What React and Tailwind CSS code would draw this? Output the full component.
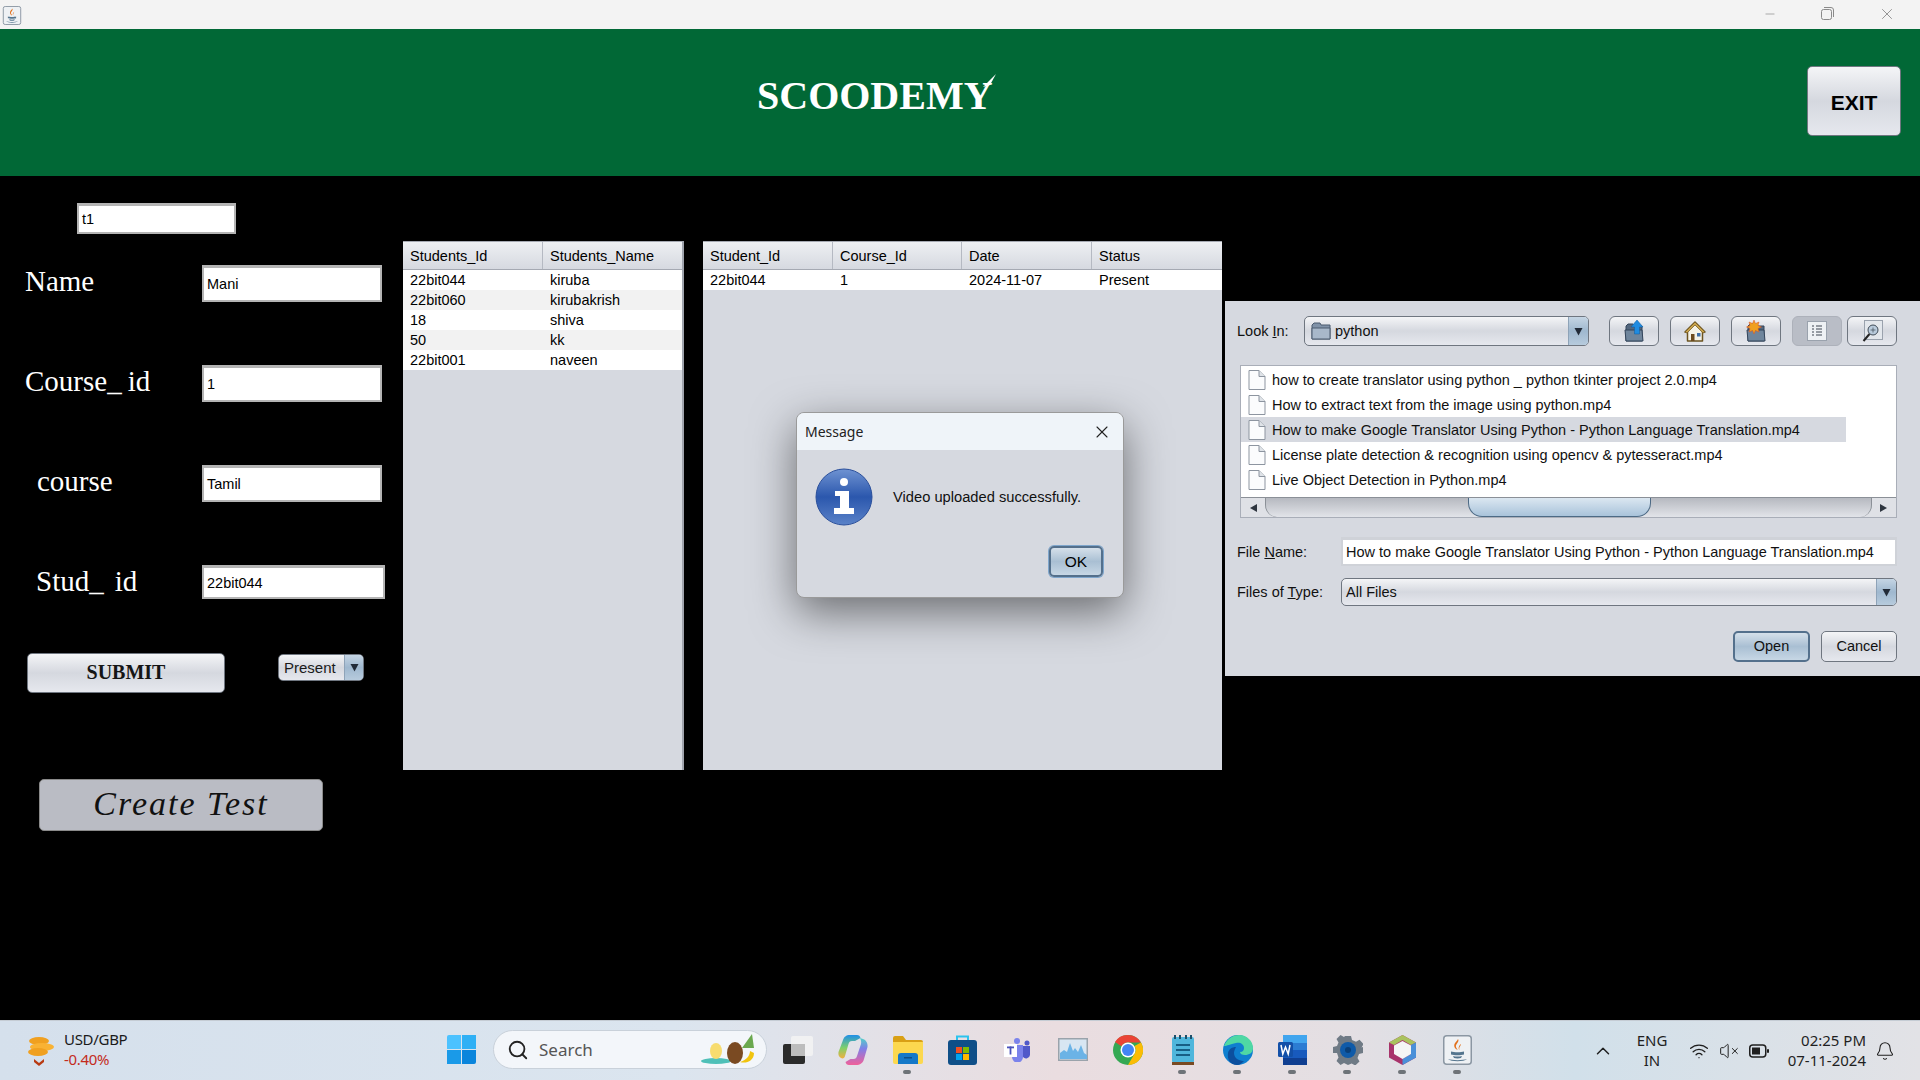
import React from 'react'
import { ChevronUp, Search, Bell, X, Minus, VolumeX, Wifi } from 'lucide-react'

const sans = "font-['Liberation_Sans',Arial,sans-serif]"
const serif = "font-['Liberation_Serif','Times_New_Roman',serif]"
const ui = "font-['Noto_Sans','Open_Sans',sans-serif]"

const btn = 'bg-gradient-to-b from-[#f4f5f7] via-[#d5d8df] to-[#e6e8ee] border border-[#6f7680] rounded-[5px]'
const focusBtn = 'bg-gradient-to-b from-[#d5e0ea] via-[#a9bfd3] to-[#c7d7e5] border-2 border-[#54708c] rounded-[5px]'

const students = [
  ['22bit044', 'kiruba'],
  ['22bit060', 'kirubakrish'],
  ['18', 'shiva'],
  ['50', 'kk'],
  ['22bit001', 'naveen'],
]

const files = [
  'how to create translator using python _ python tkinter project 2.0.mp4',
  'How to extract text from the image using python.mp4',
  'How to make Google Translator Using Python - Python Language Translation.mp4',
  'License plate detection & recognition using opencv & pytesseract.mp4',
  'Live Object Detection in Python.mp4',
]

function Field({ value, className = 'w-[180px] h-[37px]' }) {
  return (
    <div className={`${className} bg-white border-2 border-t-[3px] border-[#b4b4b4] flex items-center pl-[3px] pt-[2px] text-[14.5px] text-black ${sans}`}>
      {value}
    </div>
  )
}

function FormRow({ label, value, pad = 'pl-[25px]', fieldClass }) {
  return (
    <div className="flex items-start h-[100px]">
      <div className={`w-[202px] h-[33px] ${pad} flex items-center text-[29px] text-white ${serif}`}>{label}</div>
      <Field value={value} className={fieldClass} />
    </div>
  )
}

function Arrow({ className = '' }) {
  return (
    <svg width="9" height="9" viewBox="0 0 9 9" className={className}>
      <path d="M0.5 1h8L4.5 8.5z" fill="#222b38" />
    </svg>
  )
}

function ComboArrow({ w = 'w-[20px]' }) {
  return (
    <div className={`${w} h-full bg-gradient-to-b from-[#c5d5e4] via-[#9fb8cf] to-[#b7cbdd] border-l border-[#8ea3b8] flex items-center justify-center`}>
      <Arrow />
    </div>
  )
}

function HeaderCell({ children, className }) {
  return <div className={`${className} h-full flex items-center pl-[7px] pt-[2px] border-r border-[#b5b9c2]`}>{children}</div>
}

function FileIcon() {
  return (
    <svg width="18" height="20" viewBox="0 0 18 20" className="shrink-0">
      <path d="M1 .5h10l6 6v13H1z" fill="#fbfcfd" stroke="#8d95a0" />
      <path d="M11 .5v6h6" fill="#dfe3e8" stroke="#8d95a0" />
    </svg>
  )
}

function ToolButton({ children, active }) {
  return (
    <div className={`w-[50px] h-[30px] rounded-[6px] flex items-center justify-center ${active ? 'bg-[#b9bdc6] border border-[#adb1ba]' : btn}`}>
      {children}
    </div>
  )
}

function FolderSvg({ children }) {
  return (
    <svg width="22" height="22" viewBox="0 0 22 22">
      <path d="M3 6l2-2h5l2 2h7v15H3z" fill="#52667d" stroke="#33445a" />
      <path d="M2 10h17l1 11H3z" fill="#6f859c" stroke="#33445a" />
      {children}
    </svg>
  )
}

// taskbar icons
function Tile({ children, dot }) {
  return (
    <div className="w-[55px] h-full relative flex items-center justify-center pb-[2px]">
      {children}
      {dot && <div className="absolute left-[23px] top-[49px] w-[8px] h-[4px] rounded-full bg-[#6e7378]" />}
    </div>
  )
}

function TaskIcons() {
  return (
    <div className="flex h-full ml-[3px]">
      <Tile>
        <svg width="32" height="30" viewBox="0 0 32 30">
          <rect x="1" y="9" width="22" height="20" rx="2" fill="#2b2b2b" />
          <rect x="9" y="1" width="22" height="20" rx="2" fill="#f3f3f3" fillOpacity=".85" />
          <rect x="9" y="9" width="14" height="12" fill="#bdbdbd" />
        </svg>
      </Tile>
      <Tile>
        <svg width="30" height="30" viewBox="0 0 30 30">
          <defs>
            <linearGradient id="cpa" x1="0" y1="0" x2="0" y2="1">
              <stop offset="0" stopColor="#1f8fe8" />
              <stop offset=".55" stopColor="#7fd06a" />
              <stop offset="1" stopColor="#f0b040" />
            </linearGradient>
            <linearGradient id="cpb" x1="0" y1="0" x2="0" y2="1">
              <stop offset="0" stopColor="#4fd0c8" />
              <stop offset=".4" stopColor="#7f7fe8" />
              <stop offset="1" stopColor="#f0609a" />
            </linearGradient>
          </defs>
          <path d="M12 0h7c2 0 3 1 3.500 3L17 6h-3c-2 0-3 1-3.500 3L7 21c-.5 2-2 3-4 2-2-1-3-3-2.500-6L5 5c1-3 3-5 7-5z" fill="url(#cpa)" />
          <path d="M22 3l3 1c3 1 5 4 4.500 8L26 24c-1 4-4 6-8 6h-7c-2 0-3-1-3.500-3l5-3h3c2 0 3-1 3.500-3L23 9c.5-2 0-4-1-6z" fill="url(#cpb)" />
        </svg>
      </Tile>
      <Tile dot>
        <svg width="30" height="28" viewBox="0 0 30 28">
          <path d="M0 2a2 2 0 0 1 2-2h8l3 4h15a2 2 0 0 1 2 2v3H0z" fill="#d9a015" />
          <path d="M0 6h30v20a2 2 0 0 1-2 2H2a2 2 0 0 1-2-2z" fill="#fcd84f" />
          <path d="M5 28v-8a3 3 0 0 1 3-3h14a3 3 0 0 1 3 3v8z" fill="#1578c8" />
          <rect x="11" y="21" width="8" height="1.5" fill="#0d4f88" />
        </svg>
      </Tile>
      <Tile>
        <svg width="29" height="30" viewBox="0 0 29 30">
          <path d="M9 6V1.500h11V6" fill="none" stroke="#2cc3ee" strokeWidth="2" />
          <rect y="5" width="29" height="25" rx="3" fill="#0f4f88" />
          <rect x="8" y="12" width="6" height="6" fill="#f25022" />
          <rect x="15" y="12" width="6" height="6" fill="#7fba00" />
          <rect x="8" y="19" width="6" height="6" fill="#00a4ef" />
          <rect x="15" y="19" width="6" height="6" fill="#ffb900" />
        </svg>
      </Tile>
      <Tile>
        <svg width="27" height="24" viewBox="0 0 27 24">
          <circle cx="13" cy="3" r="3" fill="#7b83eb" />
          <circle cx="23" cy="5" r="2.500" fill="#5059c9" />
          <path d="M19 8h7v9a4 4 0 0 1-7 2z" fill="#5059c9" />
          <path d="M8 7h11v12a5 5 0 0 1-11 0z" fill="#7b83eb" />
          <rect y="6" width="13" height="13" fill="#fff" />
          <rect x="3" y="8.500" width="7" height="1.800" fill="#4b53bc" />
          <rect x="5.600" y="8.500" width="1.800" height="8" fill="#4b53bc" />
        </svg>
      </Tile>
      <Tile>
        <svg width="30" height="23" viewBox="0 0 30 23">
          <rect x=".75" y=".75" width="28.500" height="21.500" fill="#d8e6f2" stroke="#9aa3ab" strokeWidth="1.500" />
          <path d="M2 21V15l4-3 3 2 3-9 3 8 2-3 3 4 3-7 3 8 3 2v4z" fill="#6bb3e6" />
        </svg>
      </Tile>
      <Tile>
        <svg width="30" height="30" viewBox="0 0 30 30">
          <circle cx="15" cy="15" r="15" fill="#34a853" />
          <path d="M15 0a15 15 0 0 1 13 7.500H15a7.500 7.500 0 0 0-6.500 3.750L2 7a15 15 0 0 1 13-7z" fill="#ea4335" />
          <path d="M28 7.500a15 15 0 0 1-13 22.500l6.500-11.250A7.500 7.500 0 0 0 21.500 11z" fill="#fbbc05" />
          <circle cx="15" cy="15" r="7.500" fill="#fff" />
          <circle cx="15" cy="15" r="6" fill="#4285f4" />
        </svg>
      </Tile>
      <Tile dot>
        <svg width="22" height="30" viewBox="0 0 22 30">
          <rect y="2" width="22" height="26" rx="2" fill="#4fb6dc" />
          <rect y="27" width="22" height="3" fill="#7a4a22" />
          <path d="M3 0v4M8 0v4M14 0v4M19 0v4" stroke="#1c4f6a" strokeWidth="2" />
          <path d="M4 10h14M4 15h14M4 20h14" stroke="#175e85" strokeWidth="2" />
        </svg>
      </Tile>
      <Tile dot>
        <svg width="30" height="30" viewBox="0 0 30 30">
          <circle cx="15" cy="15" r="15" fill="#0f7fcf" />
          <path d="M1 11C4 3 11 0 16 0c8 0 14 6 14 13 0 5-4 7-8 7-3 0-5-1-5-3 3 0 4-2 4-4 0-4-4-6-8-5-6 1-9 3-12 3z" fill="#4fd8a4" />
          <path d="M11 18c0 6 6 8 10 8-2 2-4 4-7 4-7 0-10-6-9-12 1-4 4-6 8-6-1 2-2 4-2 6z" fill="#0c4f9e" />
        </svg>
      </Tile>
      <Tile dot>
        <svg width="29" height="30" viewBox="0 0 29 30">
          <rect x="5" y="0" width="24" height="30" rx="2" fill="#2b7cd3" />
          <rect x="5" y="0" width="24" height="8" fill="#41a5ee" />
          <rect x="5" y="15" width="24" height="8" fill="#185abd" />
          <rect x="5" y="23" width="24" height="7" fill="#103f91" />
          <rect y="7" width="15" height="15" rx="1.500" fill="#1350a8" />
          <path d="M3 10l1.800 9 2.700-7 2.700 7 1.800-9" fill="none" stroke="#fff" strokeWidth="1.500" />
        </svg>
      </Tile>
      <Tile dot>
        <svg width="30" height="30" viewBox="0 0 30 30">
          <path d="M12 1h6l1 4 4 1.700 3.500-2 4 4.300-2 3.500L30 12v6l-4 1-1.500 4 2 3.500-4.300 4-3.500-2L15 30l-4-2-3.500 2-4-4 2-3.500L4 18 0 18v-6l4-1 1.500-3.500-2-3.500 4-4 3.500 2z" fill="#6f7a85" />
          <circle cx="15" cy="15" r="8" fill="#0f5aa8" />
          <circle cx="15" cy="15" r="3" fill="#0a3f78" />
        </svg>
      </Tile>
      <Tile dot>
        <svg width="27" height="30" viewBox="0 0 27 30">
          <path d="M13.500 0L27 7.500v15L13.500 30 0 22.500v-15z" fill="#a8336b" />
          <path d="M13.500 0L27 7.500 22 10 13.500 5 5 10 0 7.500z" fill="#a9c25d" />
          <path d="M27 7.500v15L13.500 30v-6L22 19v-9z" fill="#4a90d9" />
          <path d="M13.500 6L22 10.500v8.500l-8.500 5L5 19v-8.500z" fill="#f5f5f5" />
        </svg>
      </Tile>
      <Tile dot>
        <JavaIcon size="w-[29px] h-[30px]" />
      </Tile>
    </div>
  )
}

function JavaIcon({ size }) {
  return (
    <svg viewBox="0 0 29 30" className={size}>
      <rect x=".75" y=".75" width="27.500" height="28.500" rx="3" fill="#eef1f4" stroke="#8b97a3" strokeWidth="1.500" />
      <path d="M15 4c2 3-3 5-2 8 .5 1.500 1.500 2 1.500 3-2-1-4-3-3-6 .7-2 3-3 3.500-5zM18 9c0 2-2.500 3-1.500 6-2-2 0-5 1.500-6z" fill="#e2711d" />
      <path d="M8 16.500c3 1 10 1 13 0v3c-3 1-10 1-13 0zM10 21c3 .8 6 .8 9 0l-1 2c-2 .5-5 .5-7 0z" fill="#54758e" />
      <path d="M5 24c4 1.500 15 1.500 19 0-3 3-16 3-19 0z" fill="#54758e" />
    </svg>
  )
}

export default function App() {
  return (
    <div className="w-[1920px] h-[1080px] flex flex-col overflow-hidden bg-black">
      {/* title bar */}
      <div className="h-[29px] bg-[#f3f3f3] flex items-center shrink-0">
        <div className="ml-[2px] mt-[1px]">
          <JavaIcon size="w-[20px] h-[19px]" />
        </div>
        <div className="ml-auto flex items-center text-[#8a8a8a] mb-[2px]">
          <Minus className="w-[14px] h-[14px]" strokeWidth={1.2} />
          <svg width="13" height="13" viewBox="0 0 13 13" className="ml-[44px]" fill="none" stroke="#8a8a8a">
            <rect x=".5" y="2.500" width="10" height="10" rx="2" />
            <path d="M3 .5h7a2.500 2.500 0 0 1 2.500 2.500v7" />
          </svg>
          <X className="ml-[44px] mr-[24px] w-[18px] h-[18px]" strokeWidth={1.2} />
        </div>
      </div>

      {/* green header */}
      <div className="h-[147px] bg-[#016836] flex items-start shrink-0">
        <div className={`ml-[757px] mt-[42px] relative text-[40px] leading-[50px] font-bold text-white ${serif}`}>
          SCOODEMY
          <svg width="14" height="14" viewBox="0 0 14 14" className="absolute right-[-4px] top-[2px]">
            <path d="M0 14L13 1 7 12z" fill="#fff" />
          </svg>
        </div>
        <div className={`ml-auto mr-[19px] mt-[37px] w-[94px] h-[70px] ${btn} flex items-center justify-center pt-[4px] text-[21px] font-bold text-black ${sans}`}>
          EXIT
        </div>
      </div>

      {/* main */}
      <div className="flex-1 flex items-start">
        <div className="w-[403px] shrink-0">
          <Field value="t1" className="ml-[77px] mt-[27px] w-[159px] h-[31px]" />
          <div className="mt-[31px]">
            <FormRow label="Name" value="Mani" />
            <FormRow
              label={<>Course<span className="tracking-[6px]">_</span>id</>}
              value="1"
            />
            <FormRow label="course" value="Tamil" pad="pl-[37px]" />
            <FormRow
              label={<>Stud<span className="tracking-[11px]">_</span>id</>}
              value="22bit044"
              pad="pl-[36px]"
              fieldClass="w-[183px] h-[34px]"
            />
          </div>
          <div className="-mt-[12px] flex items-start">
            <div className={`ml-[27px] w-[198px] h-[40px] ${btn} flex items-center justify-center pb-[2px] text-[20px] font-bold text-[#151515] ${serif}`}>
              SUBMIT
            </div>
            <div className={`ml-[53px] mt-[1px] w-[86px] h-[27px] ${btn} flex items-center overflow-hidden text-[15px] text-[#1a1a1a] ${sans}`}>
              <span className="flex-1 pl-[5px] pt-[2px]">Present</span>
              <ComboArrow w="w-[19px]" />
            </div>
          </div>
          <div className={`ml-[39px] mt-[86px] w-[284px] h-[52px] bg-[#babcc4] border border-[#8a8a8a] rounded-[5px] flex items-center justify-center pb-[4px] text-[34px] italic text-[#111] tracking-[2px] ${serif}`}>
            Create Test
          </div>
        </div>

        {/* students table */}
        <div className={`w-[281px] h-[529px] mt-[65px] bg-[#d6d9e0] border-r-2 border-[#a0a4ad] text-[14.5px] text-black shrink-0 ${sans}`}>
          <div className="h-[29px] flex items-center bg-gradient-to-b from-[#eef0f3] to-[#d6d9e0] border-b border-t border-[#a5a9b2]">
            <HeaderCell className="w-[140px]">Students_Id</HeaderCell>
            <div className="pl-[7px] pt-[2px]">Students_Name</div>
          </div>
          {students.map((s, i) => (
            <div key={s[0]} className={`h-[20px] flex items-center pt-[2px] ${i % 2 ? 'bg-[#f2f2f2]' : 'bg-white'}`}>
              <div className="w-[140px] pl-[7px]">{s[0]}</div>
              <div className="pl-[7px]">{s[1]}</div>
            </div>
          ))}
        </div>

        {/* attendance table, dialog sits over it */}
        <div className={`relative w-[519px] h-[529px] ml-[19px] mt-[65px] bg-[#d6d9e0] text-[14.5px] text-black shrink-0 ${sans}`}>
          <div className="h-[29px] flex items-center bg-gradient-to-b from-[#eef0f3] to-[#d6d9e0] border-b border-t border-[#a5a9b2]">
            <HeaderCell className="w-[130px]">Student_Id</HeaderCell>
            <HeaderCell className="w-[129px]">Course_Id</HeaderCell>
            <HeaderCell className="w-[130px]">Date</HeaderCell>
            <div className="pl-[7px] pt-[2px]">Status</div>
          </div>
          <div className="h-[20px] flex items-center pt-[2px] bg-white">
            <div className="w-[130px] pl-[7px]">22bit044</div>
            <div className="w-[129px] pl-[7px]">1</div>
            <div className="w-[130px] pl-[7px]">2024-11-07</div>
            <div className="pl-[7px]">Present</div>
          </div>

          <div className="absolute left-[93px] top-[171px] w-[328px] h-[186px] rounded-[8px] bg-[#d6d9e0] shadow-[0_14px_44px_rgba(0,0,0,0.5)] border border-[#9a9a9a] overflow-hidden">
            <div className={`h-[37px] bg-[#eff4f9] flex items-center justify-between pl-[8px] pr-[11px] text-[14px] text-[#222] ${ui}`}>
              <span>Message</span>
              <X className="w-[20px] h-[20px] text-[#222]" strokeWidth={1.3} />
            </div>
            <div className="flex items-center pl-[18px] mt-[18px]">
              <svg width="58" height="58" viewBox="0 0 58 58">
                <defs>
                  <linearGradient id="inf" x1="0" y1="0" x2="0" y2="1">
                    <stop offset="0" stopColor="#6f93d2" />
                    <stop offset=".5" stopColor="#2b57ad" />
                    <stop offset="1" stopColor="#5a82c8" />
                  </linearGradient>
                </defs>
                <circle cx="29" cy="29" r="28" fill="url(#inf)" stroke="#2a4f9b" />
                <circle cx="29" cy="14" r="4" fill="#fff" />
                <path d="M20 23h14v17h5v6H19v-6h6V28h-5z" fill="#fff" />
              </svg>
              <div className="ml-[20px] text-[14.7px] text-[#111]">Video uploaded successfully.</div>
            </div>
            <div className="flex justify-end pr-[20px] mt-[20px]">
              <div className={`w-[54px] h-[31px] ${focusBtn} shadow-[0_0_0_1px_#7fa6cc] flex items-center justify-center text-[15.500px] text-black`}>OK</div>
            </div>
          </div>
        </div>

        {/* file chooser */}
        <div className={`w-[695px] h-[375px] ml-[3px] mt-[125px] bg-[#d6d9e0] text-[14.5px] text-[#111] shrink-0 ${sans}`}>
          <div className="flex items-center h-[30px] mt-[15px] ml-[12px]">
            <div className="w-[67px] pt-[2px]">Look <span className="underline">I</span>n:</div>
            <div className={`w-[285px] h-full ${btn} flex items-center overflow-hidden`}>
              <svg width="20" height="18" viewBox="0 0 20 18" className="ml-[6px]">
                <path d="M1 3l2-2h6l1 2h9v14H1z" fill="#8092a8" stroke="#4a5a6e" />
                <path d="M1 6h18v11H1z" fill="#a8b8ca" stroke="#4a5a6e" />
              </svg>
              <span className="flex-1 pl-[4px] pt-[2px]">python</span>
              <ComboArrow />
            </div>
            <div className="ml-[20px] flex gap-[11px]">
              <ToolButton>
                <FolderSvg>
                  <path d="M14 0l6 7h-3.500v7h-5V7H8z" fill="#1f8be0" stroke="#0f5a9e" strokeWidth=".5" />
                </FolderSvg>
              </ToolButton>
              <ToolButton>
                <svg width="22" height="22" viewBox="0 0 22 22">
                  <path d="M11 2L1 12h2.500v9h15v-9H21z" fill="#f5f2e6" stroke="#6b5320" strokeWidth="1.500" strokeLinejoin="round" />
                  <path d="M11 2L1 12l2 1 8-8 8 8 2-1z" fill="#c8a24a" stroke="#6b5320" strokeWidth=".7" />
                  <rect x="7" y="14" width="3.500" height="7" fill="#6b4a1e" />
                  <rect x="13" y="13" width="3.500" height="3.500" fill="#3f6fa8" />
                </svg>
              </ToolButton>
              <ToolButton>
                <FolderSvg>
                  <path d="M9 0l1.500 3.500L14 2l-1 3.500L16.500 7 13 8.500l1 3.500-3.500-1.500L9 14l-1.500-3.500L4 12l1-3.500L1.500 7 5 5.500 4 2l3.500 1.500z" fill="#f0a020" stroke="#d8502a" strokeWidth=".5" />
                </FolderSvg>
              </ToolButton>
              <ToolButton active>
                <svg width="20" height="20" viewBox="0 0 20 20">
                  <rect x=".5" y=".5" width="19" height="19" fill="#eef1f4" stroke="#9aa2ad" />
                  <path d="M5 5h2M9 5h6M5 8h2M9 8h6M5 11h2M9 11h6M5 14h2M9 14h6" stroke="#3d4550" />
                </svg>
              </ToolButton>
              <div className="-ml-[6px]">
                <ToolButton>
                  <svg width="22" height="22" viewBox="0 0 22 22">
                    <rect x="3.500" y=".5" width="18" height="19" fill="#e3e7ec" stroke="#9aa2ad" />
                    <circle cx="12" cy="10" r="5" fill="#b9cbdc" stroke="#3f4a56" />
                    <path d="M9.500 10h5M12 7.500v5" stroke="#3f4a56" strokeWidth=".7" />
                    <path d="M8.500 14l-6 7" stroke="#222" strokeWidth="2" />
                  </svg>
                </ToolButton>
              </div>
            </div>
          </div>

          <div className="ml-[15px] mt-[19px] w-[657px] h-[153px] bg-white border border-[#a9aeb8] flex flex-col overflow-hidden">
            <div className="flex-1 pt-px">
              {files.map((f, i) => (
                <div key={f} className={`h-[25px] w-[605px] flex items-center pl-[7px] gap-[6px] ${i === 2 ? 'bg-[#d6d9e0]' : ''}`}>
                  <FileIcon />
                  <span className="whitespace-nowrap pt-[2px]">{f}</span>
                </div>
              ))}
            </div>
            <div className="h-[20px] shrink-0 bg-[#dfe1e6] border-t border-[#8b9097] flex items-center">
              <div className="w-[24px] flex justify-center">
                <svg width="8" height="8" viewBox="0 0 8 8"><path d="M8 0v8L1 4z" fill="#2f3640" /></svg>
              </div>
              <div className="flex-1 h-full -mt-px rounded-b-[12px] bg-gradient-to-b from-[#b6b9c0] to-[#e2e4e9] border-x border-[#8b9097] relative">
                <div className="absolute left-[202px] top-0 w-[183px] h-[19px] rounded-b-[14px] bg-gradient-to-b from-[#dbe7f1] to-[#a9c3da] border border-t-0 border-[#4d6a85]" />
              </div>
              <div className="w-[24px] flex justify-center">
                <svg width="8" height="8" viewBox="0 0 8 8"><path d="M0 0v8l7-4z" fill="#2f3640" /></svg>
              </div>
            </div>
          </div>

          <div className="flex items-center h-[29px] mt-[19px] ml-[12px]">
            <div className="w-[104px] pt-[2px]">File <span className="underline">N</span>ame:</div>
            <div className="w-[556px] h-full bg-white border-2 border-t-[3px] border-[#cfd2d8] flex items-center pl-[3px] pt-[1px] whitespace-nowrap overflow-hidden">
              How to make Google Translator Using Python - Python Language Translation.mp4
            </div>
          </div>
          <div className="flex items-center h-[28px] mt-[12px] ml-[12px]">
            <div className="w-[104px] pt-[2px]">Files of <span className="underline">T</span>ype:</div>
            <div className={`w-[556px] h-full ${btn} flex items-center overflow-hidden`}>
              <span className="flex-1 pl-[4px] pt-[2px]">All Files</span>
              <ComboArrow />
            </div>
          </div>
          <div className="flex justify-end gap-[11px] mr-[23px] mt-[25px]">
            <div className={`w-[77px] h-[31px] ${focusBtn} flex items-center justify-center`}>Open</div>
            <div className={`w-[76px] h-[31px] ${btn} flex items-center justify-center`}>Cancel</div>
          </div>
        </div>
      </div>

      {/* taskbar */}
      <div className={`h-[60px] shrink-0 flex items-center relative border-t border-[#c5ccd4] bg-[linear-gradient(90deg,#d5e0ec_0%,#dbe5ef_35%,#eadde0_55%,#e4dfe3_70%,#d1e0ea_82%,#e2e2e6_100%)] ${ui}`}>
        <div className="w-[447px] flex items-center pl-[25px] h-full">
          <svg width="30" height="30" viewBox="0 0 30 30">
            <ellipse cx="14" cy="5" rx="10" ry="4" fill="#f0a020" />
            <ellipse cx="17" cy="11" rx="12" ry="4" fill="#f9b233" />
            <ellipse cx="13" cy="16" rx="10" ry="4" fill="#f0a020" />
            <path d="M9 23l5 4 5-4v3l-5 4-5-4z" fill="#b83a12" />
          </svg>
          <div className="ml-[9px] mb-[3px] text-[15px] leading-[20px] tracking-[-0.3px]">
            <div className="text-[#1a1a1a]">USD/GBP</div>
            <div className="text-[#c42b1c]">-0.40%</div>
          </div>
        </div>
        <div className="w-[46px] flex items-center pb-[2px]">
          <div className="grid grid-cols-2 gap-[1px] w-[29px] h-[29px]">
            <div className="bg-[#4cc2ff] rounded-tl-[2px]" />
            <div className="bg-[#2fb0f5]" />
            <div className="bg-[#1a9ae8]" />
            <div className="bg-[#0a85dc] rounded-br-[2px]" />
          </div>
        </div>
        <div className="w-[274px] h-[39px] mb-[2px] rounded-full bg-[#f3f6fa] border border-[#c9d1da] flex items-center pl-[13px] relative">
          <Search className="w-[22px] h-[22px] text-[#222]" strokeWidth={2} />
          <span className="ml-[10px] text-[17px] text-[#555]">Search</span>
          <svg width="60" height="36" viewBox="0 0 60 36" className="absolute right-[6px] top-[1px]">
            <ellipse cx="16" cy="29" rx="15" ry="3" fill="#4fc0b8" />
            <ellipse cx="16" cy="19" rx="6" ry="8" fill="#f7dc6f" />
            <ellipse cx="35" cy="21" rx="8" ry="11" fill="#7a4a22" />
            <path d="M40 30c6 2 14-1 14-9l-4-2c0 5-4 9-10 11z" fill="#f1c40f" />
            <path d="M42 16L52 2l2 14z" fill="#6aa84f" />
          </svg>
        </div>
        <TaskIcons />
        <div className="ml-auto flex items-center h-full text-[#1f1f1f]">
          <ChevronUp className="w-[22px] h-[22px]" strokeWidth={1.6} />
          <div className="ml-[9px] mb-[2px] w-[58px] text-center text-[15px] leading-[20px]">
            <div>ENG</div>
            <div>IN</div>
          </div>
          <Wifi className="ml-[8px] w-[20px] h-[20px]" strokeWidth={1.6} />
          <VolumeX className="ml-[10px] w-[20px] h-[20px]" strokeWidth={1.2} />
          <svg width="20" height="14" viewBox="0 0 20 14" className="ml-[10px]">
            <rect x=".75" y="1" width="16" height="12" rx="3" fill="none" stroke="#1f1f1f" strokeWidth="1.500" />
            <rect x="3" y="3.500" width="8" height="7" fill="#1f1f1f" />
            <rect x="18" y="5" width="2" height="4" rx="1" fill="#1f1f1f" />
          </svg>
          <div className="ml-[12px] mb-[2px] w-[85px] text-right text-[15px] leading-[20px]">
            <div>02:25 PM</div>
            <div>07-11-2024</div>
          </div>
          <Bell className="ml-[9px] mr-[25px] w-[20px] h-[20px]" strokeWidth={1.3} />
        </div>
      </div>
    </div>
  )
}
